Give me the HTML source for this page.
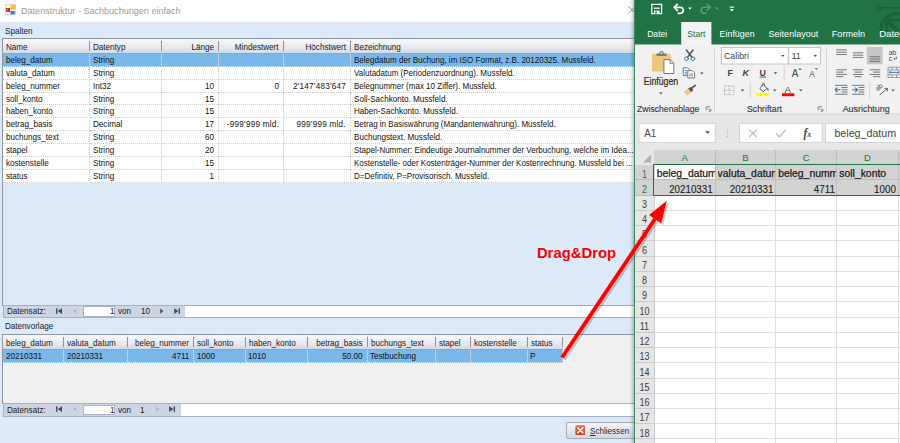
<!DOCTYPE html>
<html lang="de">
<head>
<meta charset="utf-8">
<title>Datenstruktur - Sachbuchungen einfach</title>
<style>
html,body{margin:0;padding:0;}
body{width:900px;height:443px;overflow:hidden;position:relative;background:#dbe9f9;font-family:"Liberation Sans",sans-serif;font-size:9px;color:#111;}
.abs{position:absolute;}
#stage{position:absolute;left:0;top:0;width:900px;height:443px;overflow:hidden;}
/* ---------- left window ---------- */
#win{position:absolute;left:0;top:0;width:634px;height:443px;background:#dbe9f9;overflow:hidden;}
#titlebar{position:absolute;left:0;top:0;width:634px;height:22px;background:#fff;}
#title{position:absolute;left:20.5px;top:4.6px;font-size:9.4px;line-height:12px;color:#9a9a9a;white-space:nowrap;transform:scaleX(0.966);transform-origin:0 50%;}
.lbl{position:absolute;font-size:9px;color:#1a1a1a;white-space:nowrap;}
.grid{position:absolute;border:1px solid #8e959f;box-sizing:border-box;overflow:hidden;}
.hdr{position:absolute;left:0;top:0;height:14px;background:linear-gradient(#f7f8fa,#eceef2 45%,#d6dae2);border-bottom:1px solid #9aa0aa;}
.hc{position:absolute;top:0;height:14px;line-height:15px;font-size:9px;color:#1a1a1a;white-space:nowrap;box-sizing:border-box;padding:0 3px 0 3.3px;}
.hc:after{content:"";position:absolute;right:0;top:2px;height:10px;width:1px;background:#8e949e;}
.row{position:absolute;left:0;height:12.9px;background:#fff;}
.row.sel{background:#7ab8e9;}
.c{position:absolute;top:0;height:12.9px;line-height:12.9px;font-size:9px;color:#111;white-space:nowrap;box-sizing:border-box;padding:0 3px 0 2.5px;border-right:1px dotted #cbcbcb;border-bottom:1px dotted #cbcbcb;overflow:hidden;}
.r{text-align:right;display:flex;justify-content:flex-end;}
.nav{position:absolute;height:11.5px;background:#cdd5e3;border:1px solid #a6b0c1;box-sizing:content-box;}
.nav .w{position:absolute;top:0;height:11.5px;background:#fff;}
.nav span{position:absolute;top:0.5px;line-height:11.5px;font-size:9px;white-space:nowrap;color:#1a1a1a;}
.xt{position:absolute;font-size:10.5px;white-space:nowrap;}
.xs{position:absolute;font-size:9.5px;white-space:nowrap;color:#444;}
.xc{position:absolute;font-size:11px;white-space:nowrap;color:#333;}
.cell{overflow:hidden;color:#1a1a1a;line-height:12px;height:13px;-webkit-text-stroke:0.25px #1a1a1a;}
.rn{font-size:10px;line-height:12px;text-align:center;transform:scaleX(0.9);}
.row.sel .c{border-color:rgba(255,255,255,.75);}
.hc span{position:relative;top:0.7px;}
.hc span,.c span,.lbl span,.nav span{display:inline-block;transform:scaleX(0.9);transform-origin:0 50%;}
.hc.r span,.c.r span{transform-origin:100% 50%;}
.hc.r{padding-right:5px;}
.c.r{padding-right:4px;}
</style>
</head>
<body>
<div id="stage">
<div id="win">
  <div id="titlebar">
    <svg class="abs" style="left:5px;top:4px" width="11" height="11" viewBox="5 4 11 11">
      <rect x="5.6" y="4.7" width="9.8" height="9.9" fill="#fdfdfd" stroke="#c4c4c4" stroke-width="0.7"/>
      <rect x="6.1" y="8" width="4" height="4" fill="#d8261c"/>
      <rect x="10.5" y="5" width="4.5" height="4.6" fill="#f3c12c"/>
      <rect x="10.5" y="11" width="4.3" height="3.3" fill="#3f7bd1"/>
      <rect x="7.4" y="9" width="0.8" height="1.6" fill="#fff" opacity="0.8"/>
    </svg>
    <div id="title">Datenstruktur - Sachbuchungen einfach</div>
    <svg class="abs" style="left:626px;top:4px" width="12" height="12" viewBox="626 4 12 12"><path d="M628 6l7.6 7.6M635.6 6l-7.6 7.6" stroke="#9c9c9c" stroke-width="1" fill="none"/></svg>
  </div>
  <div class="lbl" style="left:5.4px;top:26px;"><span>Spalten</span></div>
  <!-- grid 1 -->
  <div class="grid" id="g1" style="left:2px;top:38px;width:640px;height:268px;background:#dbe9f9;">
    <div class="hdr" style="width:640px;">
      <div class="hc" style="left:0px;width:87px;"><span>Name</span></div>
      <div class="hc" style="left:87px;width:72px;"><span>Datentyp</span></div>
      <div class="hc r" style="left:159px;width:57px;"><span>Länge</span></div>
      <div class="hc r" style="left:216px;width:65px;"><span>Mindestwert</span></div>
      <div class="hc r" style="left:281px;width:67px;"><span>Höchstwert</span></div>
      <div class="hc" style="left:348px;width:291px;"><span>Bezeichnung</span></div>
    </div>
      <div class="row sel" style="top:14.9px;width:639px;">
        <div class="c" style="left:0px;width:87px;"><span>beleg_datum</span></div>
        <div class="c" style="left:87px;width:72px;"><span>String</span></div>
        <div class="c r" style="left:159px;width:57px;"><span></span></div>
        <div class="c r" style="left:216px;width:65px;"><span></span></div>
        <div class="c r" style="left:281px;width:67px;"><span></span></div>
        <div class="c" style="left:348px;width:291px;"><span style="transform:scaleX(0.89)">Belegdatum der Buchung, im ISO Format, z.B. 20120325. Mussfeld.</span></div>
      </div>
      <div class="row" style="top:27.78px;width:639px;">
        <div class="c" style="left:0px;width:87px;"><span>valuta_datum</span></div>
        <div class="c" style="left:87px;width:72px;"><span>String</span></div>
        <div class="c r" style="left:159px;width:57px;"><span></span></div>
        <div class="c r" style="left:216px;width:65px;"><span></span></div>
        <div class="c r" style="left:281px;width:67px;"><span></span></div>
        <div class="c" style="left:348px;width:291px;"><span style="transform:scaleX(0.89)">Valutadatum (Periodenzuordnung). Mussfeld.</span></div>
      </div>
      <div class="row" style="top:40.66px;width:639px;">
        <div class="c" style="left:0px;width:87px;"><span>beleg_nummer</span></div>
        <div class="c" style="left:87px;width:72px;"><span>Int32</span></div>
        <div class="c r" style="left:159px;width:57px;"><span>10</span></div>
        <div class="c r" style="left:216px;width:65px;"><span>0</span></div>
        <div class="c r" style="left:281px;width:67px;"><span style="letter-spacing:0.3px">2'147'483'647</span></div>
        <div class="c" style="left:348px;width:291px;"><span style="transform:scaleX(0.89)">Belegnummer (max 10 Ziffer). Mussfeld.</span></div>
      </div>
      <div class="row" style="top:53.54px;width:639px;">
        <div class="c" style="left:0px;width:87px;"><span>soll_konto</span></div>
        <div class="c" style="left:87px;width:72px;"><span>String</span></div>
        <div class="c r" style="left:159px;width:57px;"><span>15</span></div>
        <div class="c r" style="left:216px;width:65px;"><span></span></div>
        <div class="c r" style="left:281px;width:67px;"><span></span></div>
        <div class="c" style="left:348px;width:291px;"><span>Soll-Sachkonto. Mussfeld.</span></div>
      </div>
      <div class="row" style="top:66.42px;width:639px;">
        <div class="c" style="left:0px;width:87px;"><span>haben_konto</span></div>
        <div class="c" style="left:87px;width:72px;"><span>String</span></div>
        <div class="c r" style="left:159px;width:57px;"><span>15</span></div>
        <div class="c r" style="left:216px;width:65px;"><span></span></div>
        <div class="c r" style="left:281px;width:67px;"><span></span></div>
        <div class="c" style="left:348px;width:291px;"><span>Haben-Sachkonto. Mussfeld.</span></div>
      </div>
      <div class="row" style="top:79.3px;width:639px;">
        <div class="c" style="left:0px;width:87px;"><span>betrag_basis</span></div>
        <div class="c" style="left:87px;width:72px;"><span>Decimal</span></div>
        <div class="c r" style="left:159px;width:57px;"><span>17</span></div>
        <div class="c r" style="left:216px;width:65px;"><span style="letter-spacing:0.3px">-999'999 mld.</span></div>
        <div class="c r" style="left:281px;width:67px;"><span style="letter-spacing:0.3px">999'999 mld.</span></div>
        <div class="c" style="left:348px;width:291px;"><span style="transform:scaleX(0.89)">Betrag in Basiswährung (Mandantenwährung). Mussfeld.</span></div>
      </div>
      <div class="row" style="top:92.18px;width:639px;">
        <div class="c" style="left:0px;width:87px;"><span>buchungs_text</span></div>
        <div class="c" style="left:87px;width:72px;"><span>String</span></div>
        <div class="c r" style="left:159px;width:57px;"><span>60</span></div>
        <div class="c r" style="left:216px;width:65px;"><span></span></div>
        <div class="c r" style="left:281px;width:67px;"><span></span></div>
        <div class="c" style="left:348px;width:291px;"><span>Buchungstext. Mussfeld.</span></div>
      </div>
      <div class="row" style="top:105.06px;width:639px;">
        <div class="c" style="left:0px;width:87px;"><span>stapel</span></div>
        <div class="c" style="left:87px;width:72px;"><span>String</span></div>
        <div class="c r" style="left:159px;width:57px;"><span>20</span></div>
        <div class="c r" style="left:216px;width:65px;"><span></span></div>
        <div class="c r" style="left:281px;width:67px;"><span></span></div>
        <div class="c" style="left:348px;width:291px;"><span style="transform:scaleX(0.89)">Stapel-Nummer: Eindeutige Journalnummer der Verbuchung, welche im Idea...</span></div>
      </div>
      <div class="row" style="top:117.94px;width:639px;">
        <div class="c" style="left:0px;width:87px;"><span>kostenstelle</span></div>
        <div class="c" style="left:87px;width:72px;"><span>String</span></div>
        <div class="c r" style="left:159px;width:57px;"><span>15</span></div>
        <div class="c r" style="left:216px;width:65px;"><span></span></div>
        <div class="c r" style="left:281px;width:67px;"><span></span></div>
        <div class="c" style="left:348px;width:291px;"><span style="transform:scaleX(0.89)">Kostenstelle- oder Kostenträger-Nummer der Kostenrechnung. Mussfeld bei ...</span></div>
      </div>
      <div class="row" style="top:130.82px;width:639px;">
        <div class="c" style="left:0px;width:87px;"><span>status</span></div>
        <div class="c" style="left:87px;width:72px;"><span>String</span></div>
        <div class="c r" style="left:159px;width:57px;"><span>1</span></div>
        <div class="c r" style="left:216px;width:65px;"><span></span></div>
        <div class="c r" style="left:281px;width:67px;"><span></span></div>
        <div class="c" style="left:348px;width:291px;"><span style="transform:scaleX(0.89)">D=Definitiv, P=Provisorisch. Mussfeld.</span></div>
      </div>
  </div>
  <div class="nav" style="left:2.5px;top:304.6px;width:640px;">
    <span style="left:3.0px;">Datensatz:</span>
    <svg class="abs" style="left:52.6px;top:2.2px" width="6.4" height="6.4" viewBox="0 0 7 7"><rect x="0.1" y="0.3" width="1.5" height="6.2" fill="#3c4a68"/><path d="M6.6 0.3V6.5L1.9 3.4Z" fill="#3c4a68"/></svg>
    <svg class="abs" style="left:69.5px;top:2.2px" width="3.4" height="6.4" viewBox="0 0 4 7"><path d="M3.6 0.5V6.3L0.2 3.4Z" fill="#a9b2c3"/></svg>
    <div class="w" style="left:79.9px;width:32px;top:0.5px;height:10.5px;border:1px solid #a9b3c4;box-sizing:border-box;"></div>
    <span style="left:106.8px;">1</span>
    <span style="left:114.0px;">von</span><span style="left:137.5px;">10</span>
    <svg class="abs" style="left:156.7px;top:2.2px" width="3.4" height="6.4" viewBox="0 0 4 7"><path d="M0.3 0.3V6.5L3.8 3.4Z" fill="#3c4a68"/></svg>
    <svg class="abs" style="left:170.1px;top:2.2px" width="6.4" height="6.4" viewBox="0 0 7 7"><path d="M0.2 0.3V6.5L4.8 3.4Z" fill="#3c4a68"/><rect x="5.1" y="0.3" width="1.5" height="6.2" fill="#3c4a68"/></svg>
    <div class="w" style="left:181.8px;width:454.7px;"></div>
  </div>
  <div class="lbl" style="left:5px;top:321px;"><span>Datenvorlage</span></div>
  <div class="grid" id="g2" style="left:2px;top:334px;width:640px;height:70px;background:#f0f0f0;">
    <div class="hdr" style="width:560px;">
      <div class="hc" style="left:0px;width:61px;"><span>beleg_datum</span></div>
      <div class="hc" style="left:61px;width:63.5px;"><span>valuta_datum</span></div>
      <div class="hc r" style="left:124.5px;width:66.5px;"><span>beleg_nummer</span></div>
      <div class="hc" style="left:191px;width:51.5px;"><span>soll_konto</span></div>
      <div class="hc" style="left:242.5px;width:62.0px;"><span>haben_konto</span></div>
      <div class="hc r" style="left:304.5px;width:60.0px;"><span>betrag_basis</span></div>
      <div class="hc" style="left:364.5px;width:68.5px;"><span>buchungs_text</span></div>
      <div class="hc" style="left:433px;width:34.80000000000001px;"><span>stapel</span></div>
      <div class="hc" style="left:467.8px;width:56.99999999999994px;"><span>kostenstelle</span></div>
      <div class="hc" style="left:524.8px;width:35.200000000000045px;"><span>status</span></div>
    </div>
      <div class="row sel" style="top:15px;width:560px;">
        <div class="c" style="left:0px;width:61px;"><span>20210331</span></div>
        <div class="c" style="left:61px;width:63.5px;"><span>20210331</span></div>
        <div class="c r" style="left:124.5px;width:66.5px;"><span>4711</span></div>
        <div class="c" style="left:191px;width:51.5px;"><span>1000</span></div>
        <div class="c" style="left:242.5px;width:62.0px;"><span>1010</span></div>
        <div class="c r" style="left:304.5px;width:60.0px;"><span>50.00</span></div>
        <div class="c" style="left:364.5px;width:68.5px;"><span>Testbuchung</span></div>
        <div class="c" style="left:433px;width:34.80000000000001px;"><span></span></div>
        <div class="c" style="left:467.8px;width:56.99999999999994px;"><span></span></div>
        <div class="c" style="left:524.8px;width:35.200000000000045px;"><span>P</span></div>
      </div>
  </div>
  <div class="nav" style="left:2.5px;top:403.2px;width:640px;">
    <span style="left:3.0px;">Datensatz:</span>
    <svg class="abs" style="left:52.6px;top:2.2px" width="6.4" height="6.4" viewBox="0 0 7 7"><rect x="0.1" y="0.3" width="1.5" height="6.2" fill="#3c4a68"/><path d="M6.6 0.3V6.5L1.9 3.4Z" fill="#3c4a68"/></svg>
    <svg class="abs" style="left:69.5px;top:2.2px" width="3.4" height="6.4" viewBox="0 0 4 7"><path d="M3.6 0.5V6.3L0.2 3.4Z" fill="#a9b2c3"/></svg>
    <div class="w" style="left:79.9px;width:32px;top:0.5px;height:10.5px;border:1px solid #a9b3c4;box-sizing:border-box;"></div>
    <span style="left:106.8px;">1</span>
    <span style="left:114.0px;">von</span><span style="left:136.5px;">1</span>
    <svg class="abs" style="left:152.2px;top:2.2px" width="3.4" height="6.4" viewBox="0 0 4 7"><path d="M0.3 0.3V6.5L3.8 3.4Z" fill="#a9b2c3"/></svg>
    <svg class="abs" style="left:165.5px;top:2.2px" width="6.4" height="6.4" viewBox="0 0 7 7"><path d="M0.2 0.3V6.5L4.8 3.4Z" fill="#3c4a68"/><rect x="5.1" y="0.3" width="1.5" height="6.2" fill="#3c4a68"/></svg>
    <div class="w" style="left:177.5px;width:459.0px;"></div>
  </div>
  <div class="abs" style="left:565.5px;top:422px;width:72px;height:16.5px;box-sizing:border-box;border:1px solid #a3a9b5;border-radius:2px;background:linear-gradient(#f3f5f8,#e4e7ed 50%,#d3d7e0);"></div>
  <svg class="abs" style="left:574.6px;top:424.6px" width="10.6" height="10.6" viewBox="0 0 10 10"><defs><linearGradient id="rg" x1="0" y1="0" x2="0" y2="1"><stop offset="0" stop-color="#f0694a"/><stop offset="1" stop-color="#d8341a"/></linearGradient></defs><rect x="0.3" y="0.3" width="9.4" height="9.4" rx="1.6" fill="url(#rg)"/><path d="M2.7 2.7L7.3 7.3M7.3 2.7L2.7 7.3" stroke="#fff" stroke-width="1.7" stroke-linecap="round"/></svg>
  <div class="lbl" style="left:590px;top:426px;color:#1f2a44;"><span><u>S</u>chliessen</span></div>
</div>
<div class="abs" style="left:629px;top:0;width:5px;height:443px;background:linear-gradient(90deg,rgba(0,0,0,0),rgba(0,0,0,0.05) 40%,rgba(0,0,0,0.22));"></div>
<!-- excel -->
<div id="xl" class="abs" style="left:634px;top:0;width:266px;height:443px;background:#fff;overflow:hidden;">
  <div class="abs" style="left:0;top:0;width:266px;height:44.5px;background:#217346;"></div>
  <svg class="abs" style="left:0;top:0" width="266" height="151" viewBox="634 0 266 151">
    <clipPath id="dc"><rect x="860" y="0" width="40" height="31"/></clipPath><g fill="none" stroke="#1c6239" stroke-width="1.6" clip-path="url(#dc)"><circle cx="878.2" cy="7.8" r="2.3"/><path d="M880.6 7.8H900"/><circle cx="897" cy="30" r="16.3" stroke-width="3.2"/><path d="M886.6 31V20H900" stroke-width="3"/><path d="M887.5 21L900 33" stroke-width="3.6"/></g>
    <g fill="none" stroke="#fff" stroke-width="1.2"><path d="M651.8 4.3h9.8v9.3h-9.8z"/><path d="M653.6 8.2h6.2"/></g><rect x="654" y="10.6" width="5.6" height="3" fill="#fff"/><rect x="655.2" y="11.6" width="1.7" height="2" fill="#217346"/>
    <g fill="none" stroke="#fff" stroke-width="1.7" stroke-linejoin="miter"><path d="M677.8 3.8L674.2 7.3L677.8 10.8"/><path d="M674.8 7.3h5.4a3 3 0 0 1 0 6h-2.6"/></g>
    <path d="M688.1 7.5h3.6l-1.8 2.3z" fill="#fff"/>
    <g fill="none" stroke="#5e9e7c" stroke-width="1.6"><path d="M706.6 3.8L710.2 7.3L706.6 10.8"/><path d="M709.6 7.3h-5.4a3 3 0 0 0 0 6h2.6"/></g>
    <path d="M715 7.5h3.6l-1.8 2.3z" fill="#5e9e7c"/>
    <rect x="729.7" y="6.6" width="4.4" height="1.1" fill="#fff"/><path d="M729.7 8.9h4.4l-2.2 2.6z" fill="#fff"/>
    <rect x="681.2" y="22" width="30.2" height="23" fill="#f3f3f3"/>
    <text x="647.2" y="36.5" font-family="Liberation Sans, sans-serif" font-size="9.6" fill="#fff" textLength="20" lengthAdjust="spacingAndGlyphs">Datei</text>
    <text x="687.3" y="36.5" font-family="Liberation Sans, sans-serif" font-size="9.6" fill="#217346" textLength="18.2" lengthAdjust="spacingAndGlyphs">Start</text>
    <text x="719.6" y="36.5" font-family="Liberation Sans, sans-serif" font-size="9.6" fill="#fff" textLength="35" lengthAdjust="spacingAndGlyphs">Einfügen</text>
    <text x="768.6" y="36.5" font-family="Liberation Sans, sans-serif" font-size="9.6" fill="#fff" textLength="49.6" lengthAdjust="spacingAndGlyphs">Seitenlayout</text>
    <text x="831.8" y="36.5" font-family="Liberation Sans, sans-serif" font-size="9.6" fill="#fff" textLength="33.3" lengthAdjust="spacingAndGlyphs">Formeln</text>
    <text x="879.2" y="36.5" font-family="Liberation Sans, sans-serif" font-size="9.6" fill="#fff" textLength="25.5" lengthAdjust="spacingAndGlyphs">Daten</text>
    <rect x="635" y="44.5" width="265" height="69.5" fill="#f1f1f1"/>
    <rect x="635" y="114" width="265" height="37" fill="#e6e6e6"/>
    <rect x="635" y="113.5" width="265" height="1" fill="#d4d4d4"/>
    <rect x="714.0" y="49" width="1" height="62.6" fill="#d2d2d2"/>
    <rect x="826.0" y="49" width="1" height="62.6" fill="#d2d2d2"/>
    <text x="637" y="111.6" font-family="Liberation Sans, sans-serif" font-size="8.9" fill="#3a3a3a" stroke="#3a3a3a" stroke-width="0.15" textLength="62.4" lengthAdjust="spacingAndGlyphs">Zwischenablage</text>
    <text x="747" y="111.6" font-family="Liberation Sans, sans-serif" font-size="8.9" fill="#3a3a3a" stroke="#3a3a3a" stroke-width="0.15" textLength="35" lengthAdjust="spacingAndGlyphs">Schriftart</text>
    <text x="842.7" y="111.6" font-family="Liberation Sans, sans-serif" font-size="8.9" fill="#3a3a3a" stroke="#3a3a3a" stroke-width="0.15" textLength="47" lengthAdjust="spacingAndGlyphs">Ausrichtung</text>
    <g fill="none" stroke="#777" stroke-width="0.9"><path d="M706.2 110.4V106.8H710.0"/><path d="M708.2 108.6L710.6 111M710.8000000000001 109V111.2H708.6"/></g>
    <g fill="none" stroke="#777" stroke-width="0.9"><path d="M818.2 110.4V106.8H822.0"/><path d="M820.2 108.6L822.6 111M822.8000000000001 109V111.2H820.6"/></g>
    <rect x="652" y="53.7" width="18.4" height="17.8" rx="1" fill="#eec77c"/>
    <path d="M656.5 56v-2.6h2.7a2.3 2.3 0 0 1 4.6 0h2.7v2.6z" fill="#7a7a7a"/><circle cx="661.5" cy="52.9" r="0.9" fill="#f1f1f1"/>
    <path d="M663.9 59.6h6.3l3.6 3.6v10.3h-9.9z" fill="#fff" stroke="#777" stroke-width="1"/><path d="M670 59.8v3.6h3.6" fill="none" stroke="#777" stroke-width="0.9"/>
    <text x="643.7" y="84.9" font-family="Liberation Sans, sans-serif" font-size="10.2" fill="#262626" stroke="#262626" stroke-width="0.2" textLength="34.5" lengthAdjust="spacingAndGlyphs">Einfügen</text>
    <path d="M659 92.4h3.7l-1.85 2z" fill="#555"/>
    <g fill="none" stroke-linecap="round"><path d="M686.4 50L692 57.4M693 50L687.4 57.4" stroke="#505050" stroke-width="1.5"/><circle cx="686.5" cy="58.7" r="1.9" stroke="#3b7ac2" stroke-width="0.95"/><circle cx="692.9" cy="58.7" r="1.9" stroke="#3b7ac2" stroke-width="0.95"/></g>
    <g fill="#fff" stroke="#6a6a6a" stroke-width="0.9"><path d="M683.2 67.8h4.4l1.8 1.8v6h-6.2z"/><path d="M687.8 70.6h4.6l2.2 2.2v5.2h-6.8z"/></g><path d="M684.6 70.5h3M684.6 72.3h2.4M684.6 74h2.4" stroke="#2f6fb7" stroke-width="0.8"/><path d="M689.4 74h3.8M689.4 75.8h3.8" stroke="#2f6fb7" stroke-width="0.8"/>
    <path d="M700 72.5h3.6l-1.8 2z" fill="#555"/>
    <path d="M684 91.6l4.6-3.2l3 3.6l-4.4 3.4z" fill="#eec77c"/><path d="M688.2 88.6l2.4-1.7l2.8 3.4l-2.2 1.8z" fill="#555"/><path d="M691.6 88.2l3.6-2.8" stroke="#555" stroke-width="1.8" stroke-linecap="round"/>
    <rect x="721.4" y="47.5" width="66.8" height="16.5" fill="#fff" stroke="#c6c6c6" stroke-width="1"/>
    <rect x="788.7" y="47.5" width="31.8" height="16.5" fill="#fff" stroke="#c6c6c6" stroke-width="1"/>
    <text x="724" y="59" font-family="Liberation Sans, sans-serif" font-size="9" fill="#444" textLength="25" lengthAdjust="spacingAndGlyphs">Calibri</text>
    <text x="791.4" y="59" font-family="Liberation Sans, sans-serif" font-size="9" fill="#444" >11</text>
    <path d="M781 55h3.6l-1.8 2z" fill="#555"/>
    <path d="M813.4 55h3.6l-1.8 2z" fill="#555"/>
    <text x="727.6" y="75.9" font-family="Liberation Sans, sans-serif" font-size="9" font-weight="bold" fill="#444">F</text>
    <text x="742.6" y="75.9" font-family="Liberation Sans, sans-serif" font-size="9" font-weight="bold" font-style="italic" fill="#444">K</text>
    <text x="759.6" y="75.7" font-family="Liberation Sans, sans-serif" font-size="8.8" font-weight="bold" fill="#444">U</text><rect x="759.6" y="76.6" width="6.4" height="0.9" fill="#444"/>
    <path d="M773.7 72.3h3.6l-1.8 2z" fill="#555"/>
    <rect x="783.7" y="65.7" width="1" height="14.8" fill="#d2d2d2"/>
    <text x="791.7" y="77.4" font-family="Liberation Sans, sans-serif" font-size="10" fill="#444">A</text><path d="M798.3 70l1.7-1.9l1.7 1.9z" fill="#2f6fb7"/>
    <text x="809.2" y="77.4" font-family="Liberation Sans, sans-serif" font-size="8.4" fill="#444">A</text><path d="M814.7 68.2h3.4l-1.7 1.9z" fill="#2f6fb7"/>
    <g stroke="#9a9a9a" stroke-width="0.9" stroke-dasharray="1 1" fill="none"><rect x="724.4" y="85.9" width="9.6" height="8.8"/><path d="M729.2 86v8.8M724.4 90.3h9.6"/></g>
    <path d="M740.7 89.5h3.6l-1.8 2z" fill="#555"/>
    <rect x="749.8" y="83.3" width="1" height="15" fill="#d2d2d2"/>
    <path d="M760.4 87.2l3-2.6l3.4 3.8l-3.4 3.2l-3.4-2.6z" fill="#fff" stroke="#555" stroke-width="0.9"/><path d="M762.2 86.6v-2a1.2 1.2 0 0 1 2.4 0v1.6" fill="none" stroke="#555" stroke-width="0.8"/><path d="M767.2 87.6c1.6 1 1.8 2.6 1 3.6c-.9-.6-1.4-2-1-3.6z" fill="#2f6fb7"/>
    <rect x="756" y="93.3" width="12.7" height="2.9" fill="#ffff00"/>
    <path d="M772.9 89.5h3.6l-1.8 2z" fill="#555"/>
    <text x="784.4" y="92.5" font-family="Liberation Sans, sans-serif" font-size="9.6" fill="#444">A</text>
    <rect x="782" y="93.3" width="12.3" height="2.9" fill="#f00"/>
    <path d="M799.1 89.5h3.6l-1.8 2z" fill="#555"/>
    <rect x="836.2" y="49.45" width="10.6" height="0.9" fill="#6a6a6a"/><rect x="836.2" y="51.75" width="10.6" height="0.9" fill="#6a6a6a"/><rect x="836.2" y="54.05" width="10.6" height="0.9" fill="#6a6a6a"/>
    <rect x="852.8" y="52.35" width="10.5" height="0.9" fill="#6a6a6a"/><rect x="852.8" y="54.65" width="10.5" height="0.9" fill="#6a6a6a"/><rect x="852.8" y="56.95" width="10.5" height="0.9" fill="#6a6a6a"/>
    <rect x="866.8" y="47" width="15.9" height="17.3" fill="#c6c6c6"/>
    <rect x="869.7" y="56.35" width="10.5" height="0.9" fill="#6a6a6a"/><rect x="869.7" y="58.65" width="10.5" height="0.9" fill="#6a6a6a"/><rect x="869.7" y="60.95" width="10.5" height="0.9" fill="#6a6a6a"/>
    <text x="888.8" y="55.4" font-family="Liberation Sans, sans-serif" font-size="6.8" fill="#444">ab</text><text x="888.8" y="60.8" font-family="Liberation Sans, sans-serif" font-size="6.8" fill="#444">c</text><path d="M896.6 56.5v2.3h-2.6M895 57.6l-1.2 1.2l1.2 1.2" fill="none" stroke="#2f6fb7" stroke-width="0.8"/>
    <rect x="836.2" y="69.35" width="10.6" height="0.9" fill="#6a6a6a"/><rect x="836.2" y="71.65" width="7.2" height="0.9" fill="#6a6a6a"/><rect x="836.2" y="73.95" width="10.6" height="0.9" fill="#6a6a6a"/><rect x="836.2" y="76.25" width="7.2" height="0.9" fill="#6a6a6a"/>
    <rect x="852.8" y="69.35" width="10.5" height="0.9" fill="#6a6a6a"/><rect x="854.6" y="71.65" width="6.9" height="0.9" fill="#6a6a6a"/><rect x="852.8" y="73.95" width="10.5" height="0.9" fill="#6a6a6a"/><rect x="854.6" y="76.25" width="6.9" height="0.9" fill="#6a6a6a"/>
    <rect x="869.7" y="69.35" width="10.5" height="0.9" fill="#6a6a6a"/><rect x="873.1" y="71.65" width="7.1" height="0.9" fill="#6a6a6a"/><rect x="869.7" y="73.95" width="10.5" height="0.9" fill="#6a6a6a"/><rect x="873.1" y="76.25" width="7.1" height="0.9" fill="#6a6a6a"/>
    <g fill="none" stroke="#8c8c8c" stroke-width="0.8"><rect x="888" y="67.2" width="12.6" height="10.4"/><path d="M888 70h12.6M888 74.8h12.6M892 67.2v2.8M896.6 67.2v2.8M892 74.8v2.8M896.6 74.8v2.8"/></g><path d="M889.6 72.4h9.4M891 71l-1.5 1.4l1.5 1.4M897.6 71l1.5 1.4l-1.5 1.4" fill="none" stroke="#2f6fb7" stroke-width="0.9"/>
    <rect x="835" y="84.85" width="12.5" height="0.9" fill="#6a6a6a"/><rect x="835" y="93.75" width="12.5" height="0.9" fill="#6a6a6a"/><rect x="841.6" y="87.05" width="5.9" height="0.9" fill="#6a6a6a"/><rect x="841.6" y="89.35" width="5.9" height="0.9" fill="#6a6a6a"/><rect x="841.6" y="91.55" width="5.9" height="0.9" fill="#6a6a6a"/>
    <path d="M835.2 89.8h5.2M837.4 87.6l-2.3 2.2l2.3 2.2" fill="none" stroke="#2f6fb7" stroke-width="1.1"/>
    <rect x="852" y="84.85" width="12.4" height="0.9" fill="#6a6a6a"/><rect x="852" y="93.75" width="12.4" height="0.9" fill="#6a6a6a"/><rect x="858.6" y="87.05" width="5.8" height="0.9" fill="#6a6a6a"/><rect x="858.6" y="89.35" width="5.8" height="0.9" fill="#6a6a6a"/><rect x="858.6" y="91.55" width="5.8" height="0.9" fill="#6a6a6a"/>
    <path d="M852.2 89.8h5.2M855.2 87.6l2.3 2.2l-2.3 2.2" fill="none" stroke="#2f6fb7" stroke-width="1.1"/>
    <rect x="869.2" y="82.3" width="1" height="15.7" fill="#d2d2d2"/>
    <text x="0" y="0" font-family="Liberation Sans, sans-serif" font-size="6.8" fill="#444" transform="translate(877.4,91.4) rotate(-40)">ab</text><path d="M879.6 95l7.6-6.4M884.4 88.4h3v3" fill="none" stroke="#555" stroke-width="0.9"/>
    <path d="M891.2 89.6h3.6l-1.8 2z" fill="#555"/>
    <rect x="638.9" y="123.4" width="76.4" height="19" fill="#fff" stroke="#d4d4d4" stroke-width="1"/>
    <rect x="739.5" y="123.4" width="82.6" height="19" fill="#fff" stroke="#d4d4d4" stroke-width="1"/>
    <rect x="825.5" y="123.4" width="80" height="19" fill="#fff" stroke="#d4d4d4" stroke-width="1"/>
    <text x="644.2" y="137" font-family="Liberation Sans, sans-serif" font-size="10" fill="#444" textLength="12" lengthAdjust="spacingAndGlyphs">A1</text>
    <path d="M705 131.2h5.2l-2.6 2.6z" fill="#555"/>
    <g fill="#b5b5b5"><rect x="727" y="129.4" width="1" height="1"/><rect x="727" y="131.6" width="1" height="1"/><rect x="727" y="133.8" width="1" height="1"/><rect x="727" y="136" width="1" height="1"/></g>
    <path d="M749 129.6l8 7.4M757 129.6l-8 7.4" stroke="#b9b9b9" stroke-width="1.1" fill="none"/>
    <path d="M776.2 133.6l3.2 3.2l6.4-7.2" stroke="#b9b9b9" stroke-width="1.2" fill="none"/>
    <text x="803.6" y="137" font-family="Liberation Serif, serif" font-style="italic" font-weight="bold" font-size="11.5" fill="#444">f</text><text x="807.6" y="137.4" font-family="Liberation Serif, serif" font-style="italic" font-weight="bold" font-size="7.5" fill="#444">x</text>
    <text x="834.4" y="137" font-family="Liberation Sans, sans-serif" font-size="10.4" fill="#444" textLength="61.8" lengthAdjust="spacingAndGlyphs">beleg_datum</text>
  </svg>
  <!-- sheet -->
  <div id="sheet" class="abs" style="left:1px;top:150px;width:265px;height:293px;background:#fff;overflow:hidden;">
    <div class="abs" style="left:0.00px;top:0.00px;width:265.00px;height:14.60px;background:#e6e6e6;"></div>
    <div class="abs" style="left:19.30px;top:0.00px;width:245.70px;height:14.60px;background:#d2d2d2;"></div>
    <div class="abs" style="left:0.00px;top:14.60px;width:19.30px;height:300.00px;background:#e6e6e6;"></div>
    <div class="abs" style="left:0.00px;top:14.60px;width:19.30px;height:30.49px;background:#d2d2d2;"></div>
    <svg class="abs" style="left:7.6px;top:4.2px" width="8.6" height="8.6" viewBox="0 0 9 9"><path d="M9 0V9H0Z" fill="#b1b1b1"/></svg>
    <div class="abs" style="left:19.30px;top:14.60px;width:245.70px;height:30.49px;background:#d2d2d2;"></div>
    <div class="abs" style="left:19.80px;top:15.10px;width:60.20px;height:14.64px;background:#fff;"></div>
    <div class="abs" style="left:0.00px;top:29.34px;width:19.30px;height:1.00px;background:#bcbcbc;"></div>
    <div class="abs" style="left:0.00px;top:44.59px;width:19.30px;height:1.00px;background:#bcbcbc;"></div>
    <div class="abs" style="left:19.30px;top:59.83px;width:245.70px;height:1.00px;background:#e0e0e0;"></div>
    <div class="abs" style="left:0.00px;top:59.83px;width:19.30px;height:1.00px;background:#c9c9c9;"></div>
    <div class="abs" style="left:19.30px;top:75.08px;width:245.70px;height:1.00px;background:#e0e0e0;"></div>
    <div class="abs" style="left:0.00px;top:75.08px;width:19.30px;height:1.00px;background:#c9c9c9;"></div>
    <div class="abs" style="left:19.30px;top:90.32px;width:245.70px;height:1.00px;background:#e0e0e0;"></div>
    <div class="abs" style="left:0.00px;top:90.32px;width:19.30px;height:1.00px;background:#c9c9c9;"></div>
    <div class="abs" style="left:19.30px;top:105.56px;width:245.70px;height:1.00px;background:#e0e0e0;"></div>
    <div class="abs" style="left:0.00px;top:105.56px;width:19.30px;height:1.00px;background:#c9c9c9;"></div>
    <div class="abs" style="left:19.30px;top:120.81px;width:245.70px;height:1.00px;background:#e0e0e0;"></div>
    <div class="abs" style="left:0.00px;top:120.81px;width:19.30px;height:1.00px;background:#c9c9c9;"></div>
    <div class="abs" style="left:19.30px;top:136.05px;width:245.70px;height:1.00px;background:#e0e0e0;"></div>
    <div class="abs" style="left:0.00px;top:136.05px;width:19.30px;height:1.00px;background:#c9c9c9;"></div>
    <div class="abs" style="left:19.30px;top:151.30px;width:245.70px;height:1.00px;background:#e0e0e0;"></div>
    <div class="abs" style="left:0.00px;top:151.30px;width:19.30px;height:1.00px;background:#c9c9c9;"></div>
    <div class="abs" style="left:19.30px;top:166.54px;width:245.70px;height:1.00px;background:#e0e0e0;"></div>
    <div class="abs" style="left:0.00px;top:166.54px;width:19.30px;height:1.00px;background:#c9c9c9;"></div>
    <div class="abs" style="left:19.30px;top:181.78px;width:245.70px;height:1.00px;background:#e0e0e0;"></div>
    <div class="abs" style="left:0.00px;top:181.78px;width:19.30px;height:1.00px;background:#c9c9c9;"></div>
    <div class="abs" style="left:19.30px;top:197.03px;width:245.70px;height:1.00px;background:#e0e0e0;"></div>
    <div class="abs" style="left:0.00px;top:197.03px;width:19.30px;height:1.00px;background:#c9c9c9;"></div>
    <div class="abs" style="left:19.30px;top:212.27px;width:245.70px;height:1.00px;background:#e0e0e0;"></div>
    <div class="abs" style="left:0.00px;top:212.27px;width:19.30px;height:1.00px;background:#c9c9c9;"></div>
    <div class="abs" style="left:19.30px;top:227.52px;width:245.70px;height:1.00px;background:#e0e0e0;"></div>
    <div class="abs" style="left:0.00px;top:227.52px;width:19.30px;height:1.00px;background:#c9c9c9;"></div>
    <div class="abs" style="left:19.30px;top:242.76px;width:245.70px;height:1.00px;background:#e0e0e0;"></div>
    <div class="abs" style="left:0.00px;top:242.76px;width:19.30px;height:1.00px;background:#c9c9c9;"></div>
    <div class="abs" style="left:19.30px;top:258.00px;width:245.70px;height:1.00px;background:#e0e0e0;"></div>
    <div class="abs" style="left:0.00px;top:258.00px;width:19.30px;height:1.00px;background:#c9c9c9;"></div>
    <div class="abs" style="left:19.30px;top:273.25px;width:245.70px;height:1.00px;background:#e0e0e0;"></div>
    <div class="abs" style="left:0.00px;top:273.25px;width:19.30px;height:1.00px;background:#c9c9c9;"></div>
    <div class="abs" style="left:19.30px;top:288.49px;width:245.70px;height:1.00px;background:#e0e0e0;"></div>
    <div class="abs" style="left:0.00px;top:288.49px;width:19.30px;height:1.00px;background:#c9c9c9;"></div>
    <div class="abs" style="left:19.30px;top:303.74px;width:245.70px;height:1.00px;background:#e0e0e0;"></div>
    <div class="abs" style="left:0.00px;top:303.74px;width:19.30px;height:1.00px;background:#c9c9c9;"></div>
    <div class="abs" style="left:79.70px;top:45.09px;width:1.00px;height:300.00px;background:#e0e0e0;"></div>
    <div class="abs" style="left:79.70px;top:0.00px;width:1.00px;height:14.60px;background:#bdbdbd;"></div>
    <div class="abs" style="left:79.70px;top:14.60px;width:1.00px;height:30.49px;background:#c0c0c0;"></div>
    <div class="abs" style="left:140.30px;top:45.09px;width:1.00px;height:300.00px;background:#e0e0e0;"></div>
    <div class="abs" style="left:140.30px;top:0.00px;width:1.00px;height:14.60px;background:#bdbdbd;"></div>
    <div class="abs" style="left:140.30px;top:14.60px;width:1.00px;height:30.49px;background:#c0c0c0;"></div>
    <div class="abs" style="left:201.40px;top:45.09px;width:1.00px;height:300.00px;background:#e0e0e0;"></div>
    <div class="abs" style="left:201.40px;top:0.00px;width:1.00px;height:14.60px;background:#bdbdbd;"></div>
    <div class="abs" style="left:201.40px;top:14.60px;width:1.00px;height:30.49px;background:#c0c0c0;"></div>
    <div class="abs" style="left:262.50px;top:45.09px;width:1.00px;height:300.00px;background:#e0e0e0;"></div>
    <div class="abs" style="left:262.50px;top:0.00px;width:1.00px;height:14.60px;background:#bdbdbd;"></div>
    <div class="abs" style="left:262.50px;top:14.60px;width:1.00px;height:30.49px;background:#c0c0c0;"></div>
    <div class="abs" style="left:19.30px;top:29.34px;width:245.70px;height:1.00px;background:#c0c0c0;"></div>
    <div class="abs" style="left:18.80px;top:45.09px;width:1.00px;height:300.00px;background:#c9c9c9;"></div>
    <div class="xc" style="left:39.8px;width:20px;text-align:center;top:1.53px;line-height:12px;color:#217346;font-size:9.6px;">A</div>
    <div class="xc" style="left:100.5px;width:20px;text-align:center;top:1.53px;line-height:12px;color:#217346;font-size:9.6px;">B</div>
    <div class="xc" style="left:161.3px;width:20px;text-align:center;top:1.53px;line-height:12px;color:#217346;font-size:9.6px;">C</div>
    <div class="xc" style="left:222.5px;width:20px;text-align:center;top:1.53px;line-height:12px;color:#217346;font-size:9.6px;">D</div>
    <div class="xc rn" style="left:0;width:18.8px;top:18.50px;color:#217346;">1</div>
    <div class="xc rn" style="left:0;width:18.8px;top:33.74px;color:#217346;">2</div>
    <div class="xc rn" style="left:0;width:18.8px;top:48.99px;color:#3b3b3b;">3</div>
    <div class="xc rn" style="left:0;width:18.8px;top:64.23px;color:#3b3b3b;">4</div>
    <div class="xc rn" style="left:0;width:18.8px;top:79.48px;color:#3b3b3b;">5</div>
    <div class="xc rn" style="left:0;width:18.8px;top:94.72px;color:#3b3b3b;">6</div>
    <div class="xc rn" style="left:0;width:18.8px;top:109.96px;color:#3b3b3b;">7</div>
    <div class="xc rn" style="left:0;width:18.8px;top:125.21px;color:#3b3b3b;">8</div>
    <div class="xc rn" style="left:0;width:18.8px;top:140.45px;color:#3b3b3b;">9</div>
    <div class="xc rn" style="left:0;width:18.8px;top:155.70px;color:#3b3b3b;">10</div>
    <div class="xc rn" style="left:0;width:18.8px;top:170.94px;color:#3b3b3b;">11</div>
    <div class="xc rn" style="left:0;width:18.8px;top:186.18px;color:#3b3b3b;">12</div>
    <div class="xc rn" style="left:0;width:18.8px;top:201.43px;color:#3b3b3b;">13</div>
    <div class="xc rn" style="left:0;width:18.8px;top:216.67px;color:#3b3b3b;">14</div>
    <div class="xc rn" style="left:0;width:18.8px;top:231.92px;color:#3b3b3b;">15</div>
    <div class="xc rn" style="left:0;width:18.8px;top:247.16px;color:#3b3b3b;">16</div>
    <div class="xc rn" style="left:0;width:18.8px;top:262.40px;color:#3b3b3b;">17</div>
    <div class="xc rn" style="left:0;width:18.8px;top:277.65px;color:#3b3b3b;">18</div>
    <div class="xc rn" style="left:0;width:18.8px;top:292.89px;color:#3b3b3b;">19</div>
    <div class="xc cell" style="left:21.7px;width:58.0px;top:18.20px;font-size:10.4px;">beleg_datum</div>
    <div class="xc cell" style="left:21.3px;width:56.7px;top:34.04px;text-align:right;font-size:10.3px;-webkit-text-stroke-width:0.1px;transform:scaleX(0.95);transform-origin:100% 50%;">20210331</div>
    <div class="xc cell" style="left:82.6px;width:57.7px;top:18.20px;font-size:10.4px;">valuta_datum</div>
    <div class="xc cell" style="left:82.2px;width:56.4px;top:34.04px;text-align:right;font-size:10.3px;-webkit-text-stroke-width:0.1px;transform:scaleX(0.95);transform-origin:100% 50%;">20210331</div>
    <div class="xc cell" style="left:143.2px;width:58.2px;top:18.20px;font-size:10.4px;">beleg_nummer</div>
    <div class="xc cell" style="left:142.8px;width:56.9px;top:34.04px;text-align:right;font-size:10.3px;-webkit-text-stroke-width:0.1px;transform:scaleX(0.95);transform-origin:100% 50%;">4711</div>
    <div class="xc cell" style="left:204.3px;width:58.2px;top:18.20px;font-size:10.4px;">soll_konto</div>
    <div class="xc cell" style="left:203.9px;width:56.9px;top:34.04px;text-align:right;font-size:10.3px;-webkit-text-stroke-width:0.1px;transform:scaleX(0.95);transform-origin:100% 50%;">1000</div>
    <div class="abs" style="left:18.4px;top:13.7px;width:260px;height:30.7px;border:1.6px solid #217346;box-sizing:content-box;"></div>
  </div>
  <div class="abs" style="left:0;top:0;width:1px;height:443px;background:#3d8a5e;"></div>
</div>
<svg class="abs" style="left:0;top:0;pointer-events:none" width="900" height="443" viewBox="0 0 900 443">
  <g opacity="0.3" transform="translate(2,1.6)">
    <line x1="562" y1="357.5" x2="655" y2="219" stroke="#555" stroke-width="4"/>
    <path d="M666.8 200.7L649.1 215L661.2 223.3Z" fill="#555"/>
  </g>
  <line x1="562" y1="357.5" x2="655" y2="219" stroke="#ff0000" stroke-width="3.8"/>
  <path d="M666.8 200.7L649.1 215L661.2 223.3Z" fill="#ff0000"/>
  <text x="536.9" y="258" font-family="Liberation Sans, sans-serif" font-weight="bold" font-size="14.8" fill="#ff0000" textLength="79.2" lengthAdjust="spacingAndGlyphs">Drag&amp;Drop</text>
</svg>
</div>
</body>
</html>
